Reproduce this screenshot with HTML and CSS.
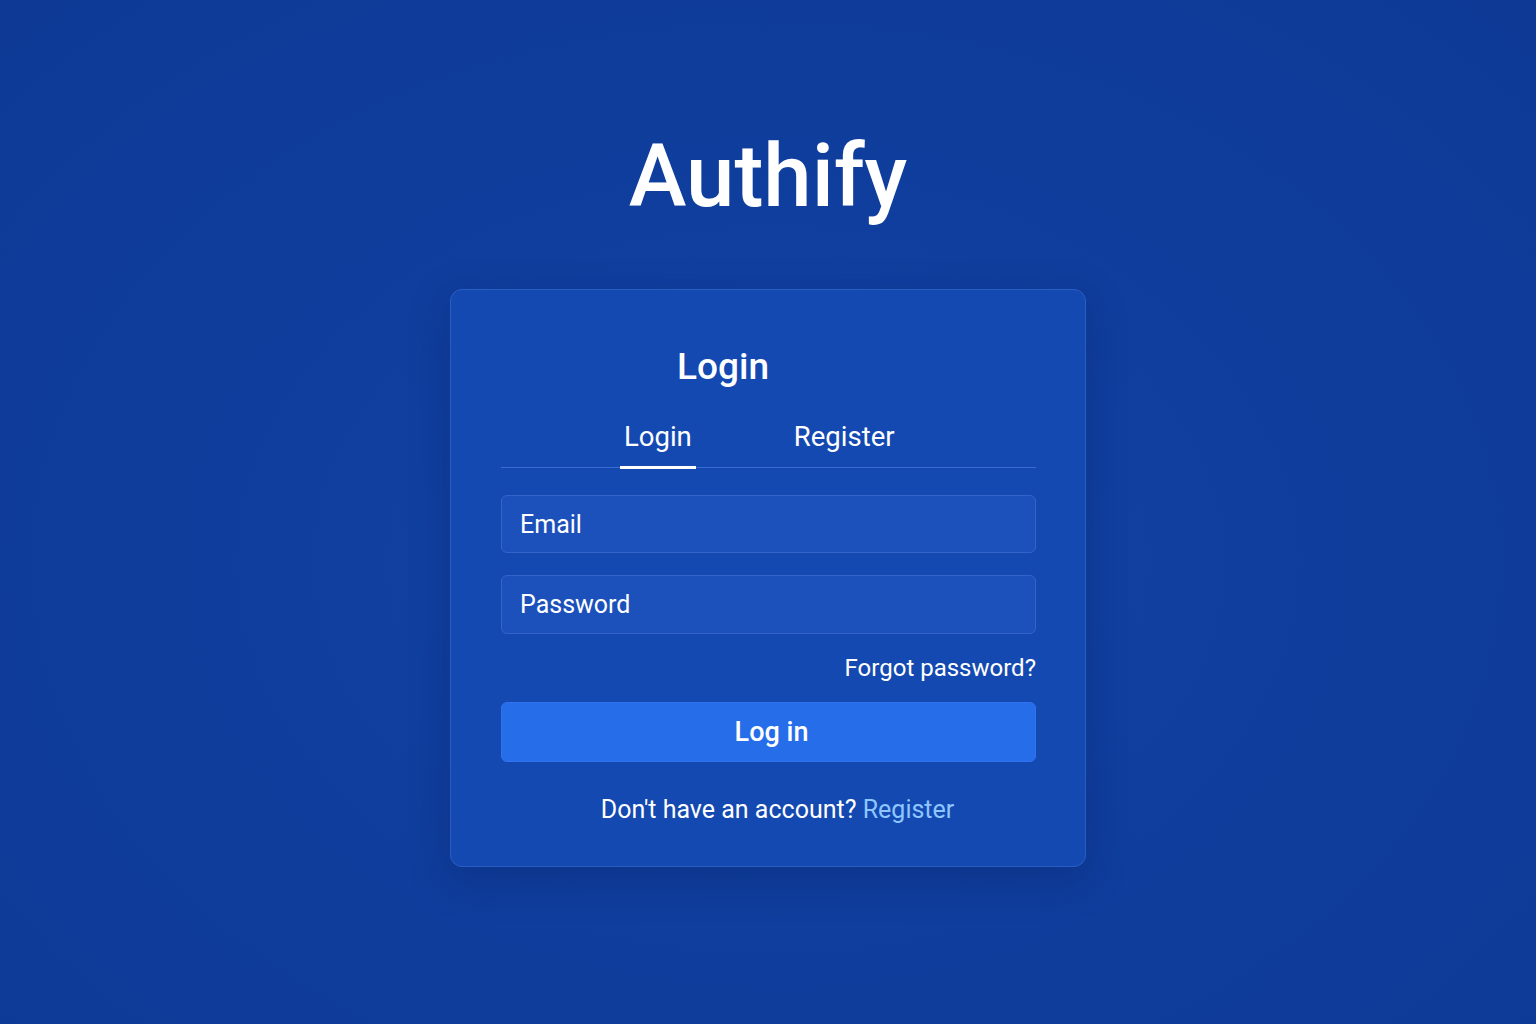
FILE: index.html
```html
<!DOCTYPE html>
<html lang="en">
<head>
  <meta charset="UTF-8">
  <title>Authify</title>
  <link rel="stylesheet" href="styles.css">
</head>
<body>
  <div class="page">
    <h1 class="brand">Authify</h1>

    <div class="card">
      <h2 class="card-title">Login</h2>

      <div class="tabs">
        <button class="tab active">Login</button>
        <button class="tab">Register</button>
      </div>

      <form class="form">
        <input class="field" type="email" placeholder="Email">
        <input class="field" type="password" placeholder="Password">
        <a href="#" class="forgot">Forgot password?</a>
        <button type="button" class="submit">Log in</button>
      </form>

      <p class="switch">Don't have an account? <a href="#">Register</a></p>
    </div>
  </div>
</body>
</html>
```

FILE: styles.css
```css
* {
  box-sizing: border-box;
  margin: 0;
  padding: 0;
}
body {
  background: radial-gradient(ellipse at 50% 55%, #1243a6 0%, #0f3d9c 55%, #0e3a96 100%);
  min-height: 100vh;
  font-family: Roboto, "Liberation Sans", sans-serif;
  color: #fff;
}
.page {
  display: flex;
  flex-direction: column;
  align-items: center;
  padding-top: 133px;
}
.brand {
  font-size: 87px;
  font-weight: 500;
  line-height: 1;
  margin-bottom: 69px;
}
.card {
  width: 636px;
  padding: 55px 49px 41px 50px;
  background: #1449b2;
  border: 1px solid #2a5cc6;
  border-radius: 12px;
  box-shadow: 0 12px 40px rgba(5, 20, 70, 0.25);
}
.card-title {
  font-size: 37px;
  font-weight: 500;
  line-height: 1.2;
  padding-left: 176px;
  margin-bottom: 31px;
}
.tabs {
  display: flex;
  gap: 94px;
  padding-left: 119px;
  border-bottom: 1px solid #3b6cd2;
  margin-bottom: 27px;
}
.tab {
  background: none;
  border: none;
  border-bottom: 3px solid transparent;
  margin-bottom: -2px;
  padding: 0 4px 13px;
  color: #fff;
  font-family: inherit;
  font-size: 27.5px;
  line-height: 1.2;
  cursor: pointer;
}
.tab.active {
  border-bottom-color: #fff;
}
.form {
  display: flex;
  flex-direction: column;
}
.field {
  height: 58px;
  padding: 0 18px;
  background: #1c51bb;
  border: 1px solid #3564c9;
  border-radius: 6px;
  color: #fff;
  font-family: inherit;
  font-size: 25px;
  margin-bottom: 22px;
  outline: none;
}
.field::placeholder {
  color: #fff;
}
.field + .field {
  height: 59px;
  margin-bottom: 20px;
}
.forgot {
  align-self: flex-end;
  color: #fff;
  text-decoration: none;
  font-size: 24px;
  line-height: 1.2;
  margin-bottom: 19px;
}
.submit {
  height: 60px;
  padding-left: 6px;
  background: #266dea;
  border: 1px solid #2f74ee;
  border-radius: 6px;
  color: #fff;
  font-family: inherit;
  font-size: 27px;
  font-weight: 500;
  cursor: pointer;
}
.switch {
  margin-top: 33px;
  text-align: center;
  padding-left: 18px;
  font-size: 25px;
  line-height: 1.2;
}
.switch a {
  color: #8ec6ff;
  text-decoration: none;
}
```
